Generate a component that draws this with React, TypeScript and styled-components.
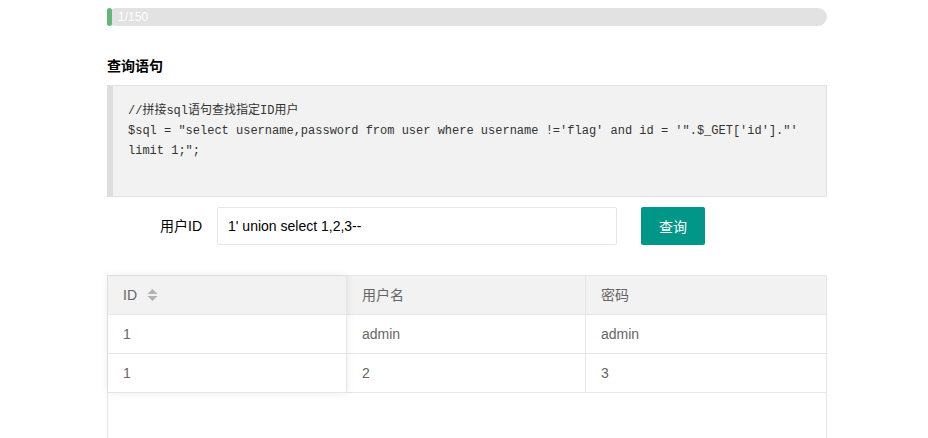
import React from 'react';
import styled, { createGlobalStyle } from 'styled-components';

const GlobalStyle = createGlobalStyle`
  html, body {
    margin: 0;
    padding: 0;
    overflow: hidden;
    background: #fff;
  }
  body {
    font-family: "Liberation Sans", "Noto Sans CJK SC", Arial, sans-serif;
    font-size: 14px;
    color: #333;
  }
`;

const Page = styled.div`
  width: 720px;
  margin-left: 107px;
  padding-top: 8px;
`;

const Progress = styled.div`
  position: relative;
  height: 18px;
  line-height: 18px;
  border-radius: 20px;
  background-color: #e2e2e2;
`;

const ProgressBar = styled.div`
  height: 100%;
  background-color: #5fb878;
  border-radius: 20px;
`;

const ProgressText = styled.span`
  position: absolute;
  left: 11px;
  top: 0;
  font-size: 12px;
  color: #fff;
`;

const Heading = styled.h3`
  margin: 30px 0 9px;
  font-size: 14px;
  line-height: 20px;
  font-weight: bold;
  color: #000;
`;

const Code = styled.pre`
  margin: 0;
  padding: 15px;
  min-height: 80px;
  border: 1px solid #e2e2e2;
  border-left: 6px solid #ddd;
  background-color: #f2f2f2;
  color: #333;
  font-family: "Liberation Mono", "Noto Sans CJK SC", monospace;
  font-size: 12px;
  line-height: 20px;
  white-space: pre-wrap;
  word-break: normal;
`;

const FormRow = styled.div`
  display: flex;
  align-items: center;
  margin-top: 10px;
`;

const Label = styled.label`
  width: 110px;
  box-sizing: border-box;
  padding: 9px 15px;
  text-align: right;
  line-height: 20px;
  color: #000;
`;

const Input = styled.input`
  width: 400px;
  height: 38px;
  box-sizing: border-box;
  padding: 0 10px;
  border: 1px solid #e6e6e6;
  border-radius: 2px;
  font-family: inherit;
  font-size: 14px;
  color: #000;
  outline: none;
`;

const Button = styled.button`
  margin-left: 24px;
  height: 38px;
  padding: 0 18px;
  border: none;
  border-radius: 2px;
  background-color: #009688;
  color: #fff;
  font-family: inherit;
  font-size: 14px;
  cursor: pointer;
`;

const TableBox = styled.div`
  margin-top: 30px;
  height: 200px;
  border: 1px solid #e6e6e6;
  border-bottom: none;
  display: flex;
  position: relative;
`;

const Column = styled.div<{ fixed?: boolean; last?: boolean }>`
  flex: ${p => (p.last ? '1' : '0 0 238px')};
  display: flex;
  flex-direction: column;
  align-self: flex-start;
  position: relative;
  z-index: ${p => (p.fixed ? 1 : 0)};
  background: #fff;
  box-shadow: ${p => (p.fixed ? '0 0 8px rgba(0, 0, 0, 0.08)' : 'none')};
  border-right: ${p => (p.last ? 'none' : '1px solid #e6e6e6')};
`;

const Cell = styled.div<{ head?: boolean }>`
  height: 38px;
  line-height: 38px;
  padding: 0 15px;
  border-bottom: 1px solid #e6e6e6;
  background-color: ${p => (p.head ? '#f2f2f2' : '#fff')};
  color: #666;
  display: flex;
  align-items: center;
  gap: 10px;
`;

const SortIcon = () => (
  <svg width="11" height="12" viewBox="0 0 11 12">
    <path d="M5.5 0 L10.5 5 L0.5 5 Z" fill="#b2b2b2" />
    <path d="M0.5 7 L10.5 7 L5.5 12 Z" fill="#b2b2b2" />
  </svg>
);

const rows = [
  ['1', 'admin', 'admin'],
  ['1', '2', '3'],
];

const headers = ['ID', '用户名', '密码'];

export default function App() {
  const current = 1;
  const total = 150;
  return (
    <>
      <GlobalStyle />
      <Page>
        <Progress>
          <ProgressBar style={{ width: `${(current / total) * 100}%` }} />
          <ProgressText>{current}/{total}</ProgressText>
        </Progress>

        <Heading>查询语句</Heading>
        <Code>
          {`//拼接sql语句查找指定ID用户
$sql = "select username,password from user where username !='flag' and id = '".$_GET['id']."' limit 1;";`}
        </Code>

        <FormRow>
          <Label>用户ID</Label>
          <Input defaultValue="1' union select 1,2,3--" />
          <Button>查询</Button>
        </FormRow>

        <TableBox>
          {headers.map((h, ci) => (
            <Column key={h} fixed={ci === 0} last={ci === headers.length - 1}>
              <Cell head>
                {h}
                {ci === 0 && <SortIcon />}
              </Cell>
              {rows.map((r, ri) => (
                <Cell key={ri}>{r[ci]}</Cell>
              ))}
            </Column>
          ))}
        </TableBox>
      </Page>
    </>
  );
}
